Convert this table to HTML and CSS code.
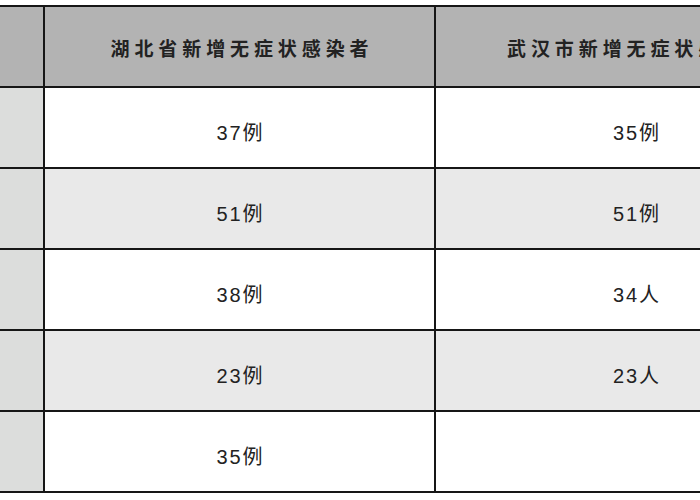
FILE: index.html
```html
<!DOCTYPE html>
<html lang="zh-CN">
<head>
<meta charset="utf-8">
<title>无症状感染者</title>
<link rel="stylesheet" href="styles.css">
</head>
<body>
<div class="frame">
  <table class="stats">
    <colgroup>
      <col class="c-date">
      <col class="c-hubei">
      <col class="c-wuhan">
    </colgroup>
    <thead>
      <tr>
        <th class="date"></th>
        <th>湖北省新增无症状感染者</th>
        <th>武汉市新增无症状感染者</th>
      </tr>
    </thead>
    <tbody>
      <tr><td class="date"></td><td>37例</td><td>35例</td></tr>
      <tr class="alt"><td class="date"></td><td>51例</td><td>51例</td></tr>
      <tr><td class="date"></td><td>38例</td><td>34人</td></tr>
      <tr class="alt"><td class="date"></td><td>23例</td><td>23人</td></tr>
      <tr><td class="date"></td><td>35例</td><td></td></tr>
    </tbody>
  </table>
</div>
</body>
</html>
```
FILE: styles.css
```css
html, body {
  margin: 0;
  padding: 0;
  background: #ffffff;
}

.frame {
  width: 700px;
  height: 500px;
  overflow: hidden;
  padding-top: 5px;
  box-sizing: border-box;
}

.stats {
  border-collapse: separate;
  border-spacing: 0;
  table-layout: fixed;
  width: 838px;
  border-top: 2px solid #161616;
  font-family: "Liberation Sans", "Noto Sans CJK SC", sans-serif;
  color: #222222;
}

.c-date { width: 45px; }
.c-hubei { width: 391px; }
.c-wuhan { width: 402px; }

.stats th,
.stats td {
  padding: 0;
  text-align: center;
  vertical-align: middle;
  border-right: 2px solid #161616;
  border-bottom: 2px solid #161616;
  box-sizing: content-box;
}

.stats th {
  height: 77px;
  padding-top: 2px;
  background: #b3b3b3;
  font-weight: bold;
  font-size: 19px;
  letter-spacing: 4.9px;
  padding-left: 5px;
}

.stats td {
  height: 71px;
  padding-top: 8px;
  background: #ffffff;
  font-size: 20px;
  letter-spacing: 2px;
  padding-left: 2px;
}

.stats tr.alt td {
  background: #e9e9e9;
}

.stats td.date,
.stats tr.alt td.date {
  background: #dcdddc;
}
```
